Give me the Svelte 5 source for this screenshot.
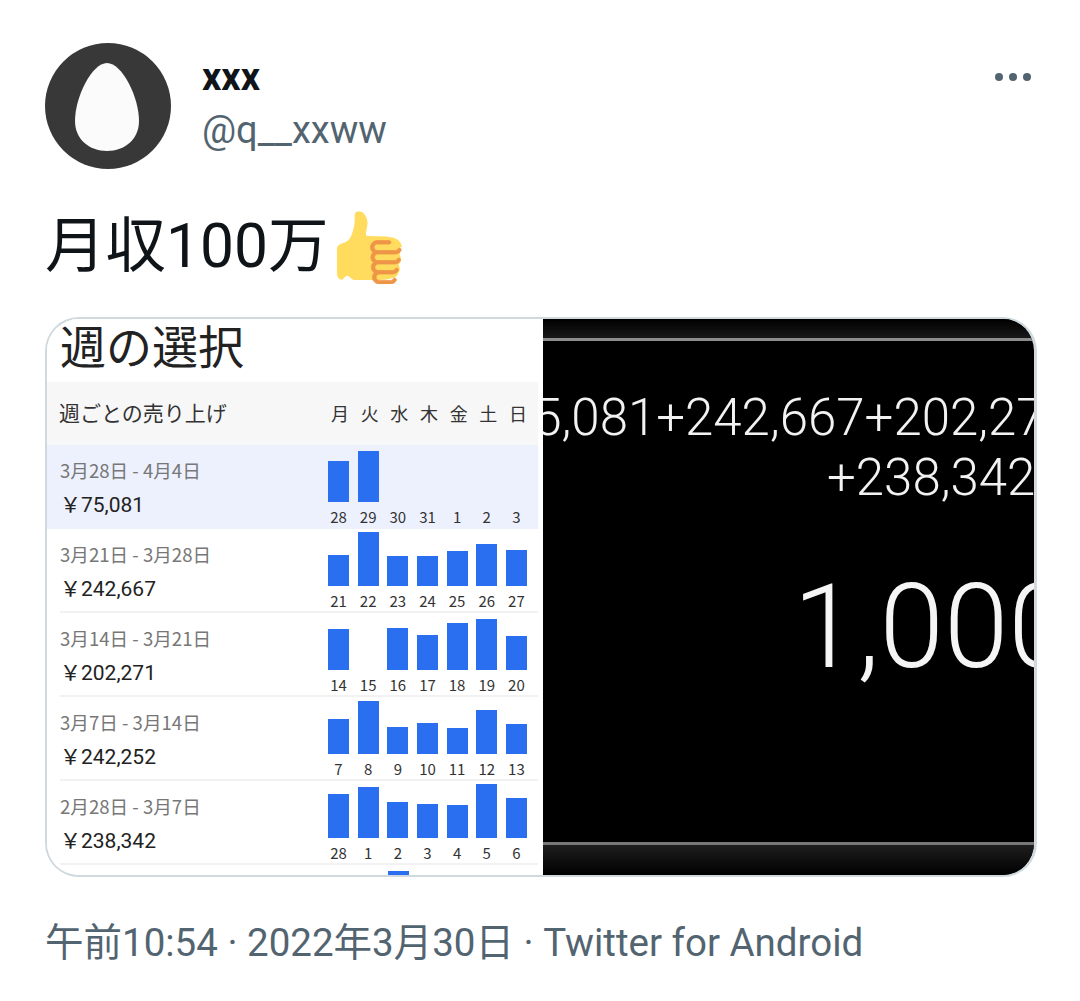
<script>
  const days = ['月', '火', '水', '木', '金', '土', '日'];

  // bar heights in px, 0 means no sales that day
  const weeks = [
    { range: '3月28日 - 4月4日', total: '75,081', selected: true, nums: [28, 29, 30, 31, 1, 2, 3], bars: [41, 51, 0, 0, 0, 0, 0] },
    { range: '3月21日 - 3月28日', total: '242,667', nums: [21, 22, 23, 24, 25, 26, 27], bars: [31, 54, 30, 30, 35, 42, 36] },
    { range: '3月14日 - 3月21日', total: '202,271', nums: [14, 15, 16, 17, 18, 19, 20], bars: [41, 0, 42, 35, 47, 51, 34] },
    { range: '3月7日 - 3月14日', total: '242,252', nums: [7, 8, 9, 10, 11, 12, 13], bars: [35, 53, 27, 31, 26, 44, 30] },
    { range: '2月28日 - 3月7日', total: '238,342', nums: [28, 1, 2, 3, 4, 5, 6], bars: [44, 51, 36, 34, 33, 54, 40] }
  ];
</script>

<main class="tweet">
  <header class="head">
    <svg class="avatar" viewBox="0 0 126 126" aria-hidden="true">
      <circle cx="63" cy="63" r="63" fill="#383838" />
      <path d="M62 20C47 20 30 54 30 78c0 18 14 30 32 30s32-12 32-30C94 54 77 20 62 20z" fill="#fbfbfb" />
    </svg>
    <div class="who">
      <div class="name">xxx</div>
      <div class="handle">@q__xxww</div>
    </div>
    <div class="more" aria-label="More"><i></i><i></i><i></i></div>
  </header>

  <p class="text">月収100万<svg class="thumb" viewBox="0 0 36 36" aria-hidden="true">
      <path fill="#FFDB5E" d="M34.956 17.916c0-.503-.12-.975-.321-1.404-1.341-4.326-7.619-4.01-16.549-4.221-1.493-.035-.639-1.798-.115-5.668.341-2.517-1.282-6.382-4.01-6.382-4.498 0-.171 3.548-4.148 12.322-2.125 4.688-6.875 2.062-6.875 6.771v10.719c0 1.833.18 3.595 2.758 3.885C8.195 30.485 8.022 32 11.238 34h12.762c4 0 9-1 9-3 .6-1 .9-1.7.9-2.5 0-.8-.2-1.4-.6-2 .7-.7 1.2-1.600 1.2-2.700 0-.9-.3-1.600-.7-2.200.7-.700.156-2.500.156-3.684z" />
      <path fill="#EE9547" stroke="#EE9547" stroke-width=".35" d="M23.02 21.249h8.604c1.17 0 2.268-.626 2.866-1.633.246-.415.109-.952-.307-1.199-.415-.247-.952-.108-1.199.307-.283.479-.806.775-1.361.775h-8.81c-.873 0-1.583-.71-1.583-1.583s.71-1.583 1.583-1.583H28.7c.483 0 .875-.392.875-.875s-.392-.875-.875-.875h-5.888c-1.838 0-3.333 1.495-3.333 3.333 0 1.025.475 1.932 1.205 2.544-.615.605-.998 1.445-.998 2.373 0 1.028.478 1.938 1.212 2.549-.611.604-.99 1.441-.99 2.367 0 1.12.559 2.108 1.409 2.713-.524.589-.852 1.356-.852 2.204 0 1.838 1.495 3.333 3.333 3.333h5.484c1.17 0 2.269-.625 2.867-1.632.247-.415.11-.952-.305-1.199-.416-.245-.953-.11-1.199.305-.285.479-.808.776-1.363.776h-5.484c-.873 0-1.583-.71-1.583-1.583s.71-1.583 1.583-1.583h6.506c1.17 0 2.27-.626 2.867-1.633.247-.416.11-.953-.305-1.199-.419-.251-.954-.11-1.199.305-.289.487-.799.777-1.363.777h-7.063c-.873 0-1.583-.711-1.583-1.584s.71-1.583 1.583-1.583h8.091c1.17 0 2.269-.625 2.867-1.632.247-.415.11-.952-.305-1.199-.417-.246-.953-.11-1.199.305-.289.486-.799.776-1.363.776H23.02c-.873 0-1.583-.71-1.583-1.583s.709-1.584 1.583-1.584z" />
    </svg></p>

  <section class="card">
    <div class="sales">
      <h2>週の選択</h2>
      <div class="table-head">
        <span class="table-title">週ごとの売り上げ</span>
        <div class="cols">
          {#each days as d}
            <span class="day">{d}</span>
          {/each}
        </div>
      </div>
      {#each weeks as w}
        <div class="row" class:selected={w.selected}>
          <div class="row-inner">
            <div class="info">
              <div class="range">{w.range}</div>
              <div class="total">￥{w.total}</div>
            </div>
            <div class="cols">
              {#each w.bars as h, i}
                <div class="cell">
                  <div class="slot"><div class="bar" style="height: {h}px"></div></div>
                  <span class="num">{w.nums[i]}</span>
                </div>
              {/each}
            </div>
          </div>
        </div>
      {/each}
      <div class="stub"></div>
    </div>

    <div class="screen">
      <div class="edge edge-top"></div>
      <div class="sum">
        <div class="sum-a">75,081+242,667+202,271+242,252</div>
        <div class="sum-b">+238,342</div>
      </div>
      <div class="result">1,000,000</div>
      <div class="edge edge-bottom"></div>
    </div>
  </section>

  <footer class="meta">午前10:54 · 2022年3月30日 · Twitter for Android</footer>
</main>

<style>
  :global(body) {
    background: #fff;
  }
  .tweet {
    width: 1080px;
    height: 1001px;
    box-sizing: border-box;
    padding: 43px 43px 0 45px;
    overflow: hidden;
    font-family: Roboto, "Noto Sans CJK JP", sans-serif;
    color: #0f1419;
  }
  .head {
    display: flex;
    align-items: flex-start;
  }
  .avatar {
    width: 126px;
    height: 126px;
    flex: none;
    display: block;
  }
  .who {
    margin-left: 31px;
    padding-top: 9px;
    flex: 1;
  }
  .name {
    font-size: 38px;
    line-height: 50px;
    font-weight: 700;
  }
  .handle {
    font-size: 38px;
    line-height: 56px;
    color: #536471;
  }
  .more {
    display: flex;
    gap: 6px;
    margin: 30px 6px 0 0;
  }
  .more i {
    width: 8px;
    height: 8px;
    border-radius: 50%;
    background: #536471;
  }
  .text {
    margin: 39px 0 0;
    height: 78px;
    display: flex;
    align-items: center;
    font-size: 60.5px;
    line-height: 78px;
    white-space: nowrap;
  }
  .thumb {
    width: 73px;
    height: 73px;
    margin-left: 2px;
    flex: none;
  }
  .card {
    margin-top: 31px;
    width: 992px;
    height: 560px;
    box-sizing: border-box;
    border: 2px solid #cfd9de;
    border-right-width: 3px;
    border-radius: 34px;
    overflow: hidden;
    display: flex;
  }
  .sales {
    width: 496px;
    flex: none;
    padding-right: 5px;
    box-sizing: border-box;
    background: #fff;
    font-family: "Noto Sans CJK JP", sans-serif;
  }
  h2 {
    margin: 0;
    height: 63px;
    padding-left: 13px;
    font-size: 46px;
    line-height: 50px;
    font-weight: 400;
    color: #222;
  }
  .table-head {
    height: 63px;
    background: #f7f7f7;
    display: flex;
    align-items: center;
    justify-content: space-between;
    padding-left: 12px;
  }
  .table-title {
    font-size: 21px;
    color: #333;
    margin-top: -4px;
  }
  .cols {
    width: 199px;
    margin-right: 11px;
    flex: none;
    display: grid;
    grid-template-columns: repeat(7, 21px);
    column-gap: 8.67px;
  }
  .day {
    font-size: 18px;
    line-height: 24px;
    text-align: center;
    color: #333;
    margin: -2px 0 0 3px;
  }
  .row {
    height: 84px;
    padding-left: 13px;
  }
  .row.selected {
    background: #edf1fd;
  }
  .row-inner {
    height: 84px;
    box-sizing: border-box;
    display: flex;
    justify-content: space-between;
    border-bottom: 2px solid #f2f2f2;
  }
  .selected .row-inner {
    border-bottom: none;
  }
  .range {
    margin-top: 13px;
    font-size: 18.6px;
    line-height: 24px;
    color: #777;
  }
  .total {
    margin-top: 10px;
    font-size: 21px;
    line-height: 26px;
    font-family: Roboto, "Noto Sans CJK JP", sans-serif;
    color: #222;
  }
  .cell {
    display: flex;
    flex-direction: column;
    align-items: center;
  }
  .slot {
    height: 57px;
    width: 21px;
    display: flex;
    align-items: flex-end;
  }
  .bar {
    width: 21px;
    background: #2a6ff0;
  }
  .num {
    font-size: 15px;
    line-height: 18px;
    margin-top: 6px;
    color: #333;
    white-space: nowrap;
  }
  .stub {
    width: 21px;
    height: 4px;
    margin: 6px 0 0 341px;
    background: #2a6ff0;
  }
  .screen {
    flex: 1;
    min-width: 0;
    background: #000;
    color: #f2f2f2;
    overflow: hidden;
    display: flex;
    flex-direction: column;
    font-family: Roboto, sans-serif;
    font-weight: 300;
  }
  .edge {
    height: 19px;
    flex: none;
  }
  .edge-top {
    background: linear-gradient(#000, #181818);
    border-bottom: 3px solid #8c8c8c;
  }
  .edge-bottom {
    height: 30px;
    margin-top: auto;
    background: linear-gradient(#1e1e1e, #000);
    border-top: 3px solid #777;
  }
  .sum {
    margin-top: 47px;
    font-size: 51px;
    line-height: 60px;
    white-space: nowrap;
  }
  .sum-a {
    margin-left: -38px;
  }
  .sum-b {
    margin-left: 284px;
  }
  .result {
    margin: 49px 0 0 250px;
    font-size: 116px;
    line-height: 140px;
    font-weight: 300;
    color: #f5f5f5;
    white-space: nowrap;
  }
  .meta {
    margin-top: 42px;
    font-size: 38.5px;
    line-height: 48px;
    color: #536471;
    white-space: nowrap;
  }
</style>
